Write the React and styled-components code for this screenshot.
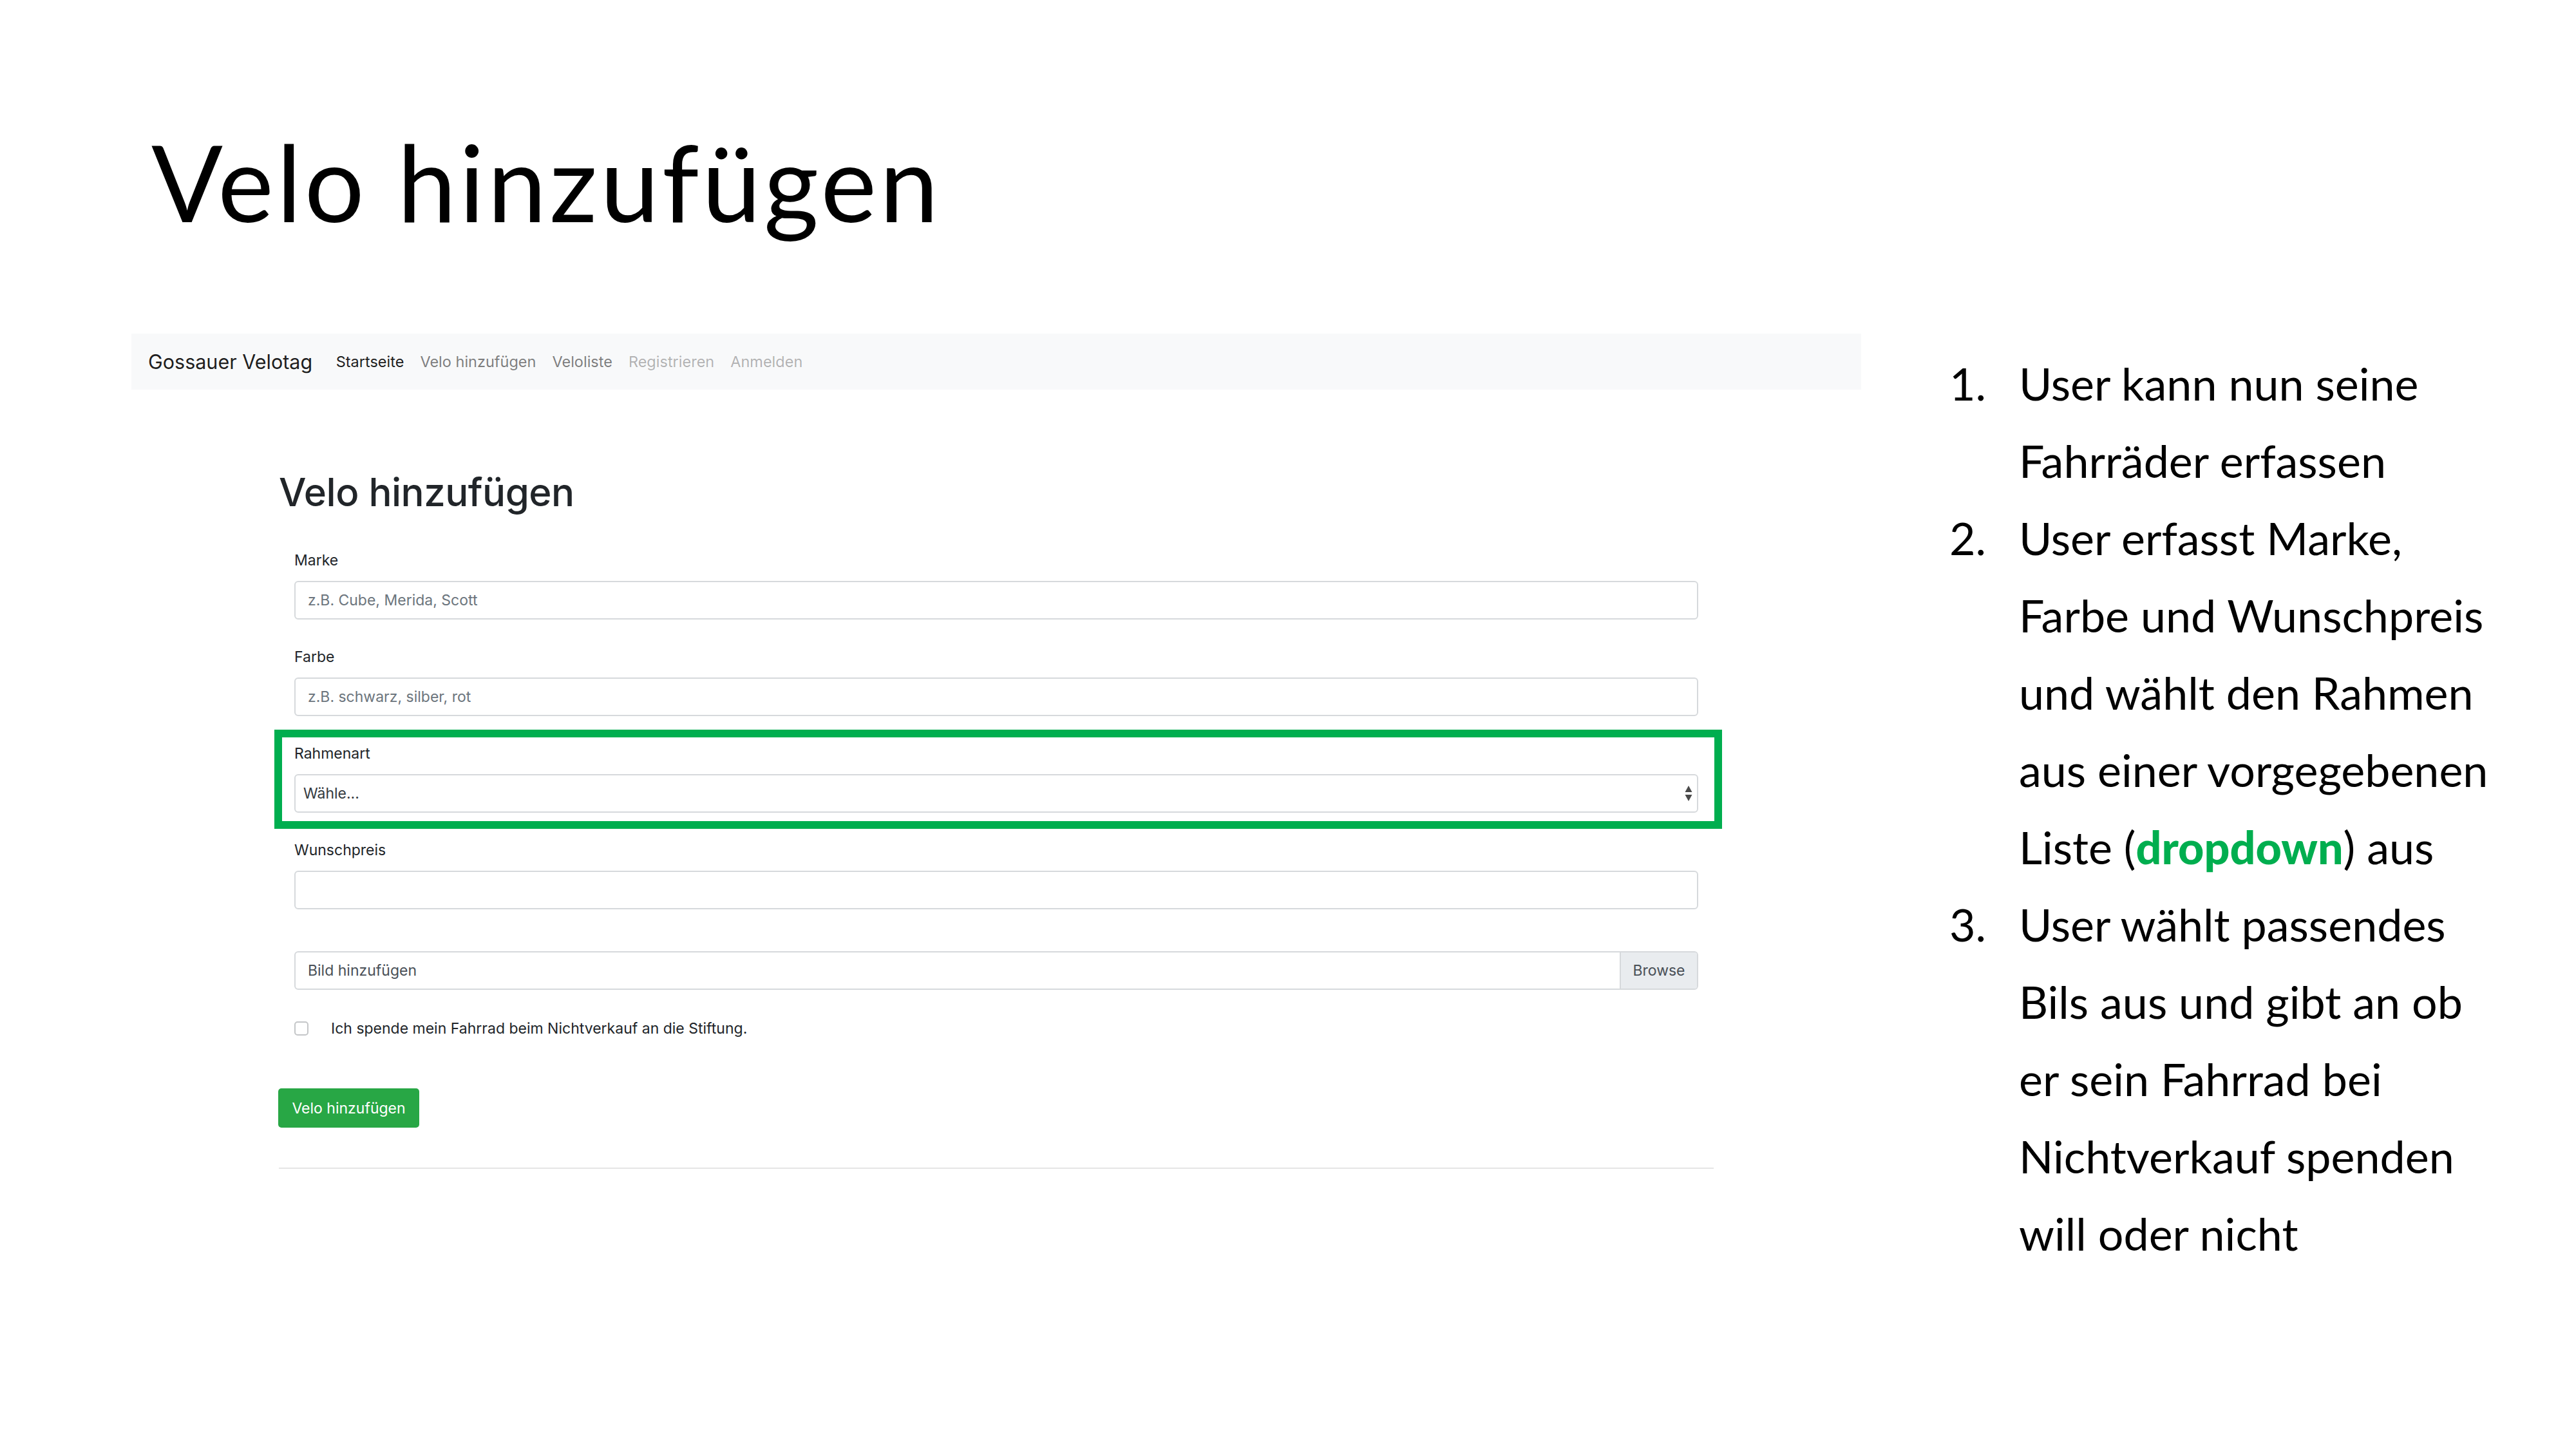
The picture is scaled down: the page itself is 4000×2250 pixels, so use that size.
import React from "react";
import styled, { createGlobalStyle } from "styled-components";

const Global = createGlobalStyle`
  html, body { margin: 0; padding: 0; background: #ffffff; }
  body { width: 4000px; height: 2250px; overflow: hidden; }
  * { box-sizing: border-box; }
`;

const Slide = styled.div`
  width: 4000px;
  height: 2250px;
  background: #ffffff;
  display: flex;
  flex-direction: column;
  font-family: Lato, "Open Sans", sans-serif;
  color: #000;
`;

const SlideTitle = styled.h1`
  margin: 183px 0 0 235px;
  font-family: Lato, "Open Sans", sans-serif;
  font-weight: 400;
  font-size: 164px;
  line-height: 197px;
  height: 197px;
  letter-spacing: 4.6px;
`;

const Body = styled.div`
  display: flex;
  align-items: flex-start;
  margin-top: 138px;
`;

/* ---------- web screenshot ---------- */
const Web = styled.div`
  margin-left: 204px;
  width: 2686px;
  font-family: Inter, "Liberation Sans", sans-serif;
  color: #212529;
`;

const NavBar = styled.nav`
  height: 87px;
  background: #f8f9fa;
  display: flex;
  align-items: center;
  padding: 0 26px;
`;

const Brand = styled.span`
  font-size: 30.5px;
  color: rgba(0, 0, 0, 0.9);
  margin-right: 24px;
`;

const NavLink = styled.span`
  font-size: 23.5px;
  padding: 0 12.5px;
  color: ${(p) =>
    p.$state === "active"
      ? "rgba(0,0,0,0.9)"
      : p.$state === "disabled"
      ? "rgba(0,0,0,0.3)"
      : "rgba(0,0,0,0.5)"};
`;

const Container = styled.div`
  padding: 0 229px;
`;

const Heading = styled.h2`
  margin: 121px 0 0 0;
  font-size: 60px;
  line-height: 77px;
  font-weight: 500;
  color: #212529;
  letter-spacing: -0.5px;
`;

const Form = styled.form`
  display: flex;
  flex-direction: column;
  padding: 0 24px;
  margin-top: 48px;
`;

const Group = styled.div`
  display: flex;
  flex-direction: column;
  margin-bottom: ${(p) => p.$mb ?? 39}px;
`;

const HighlightGroup = styled(Group)`
  border: 12px solid #00ae4f;
  padding: 6px 25px 13px 19px;
  margin: -18px -37px 14px -31px;
`;

const Label = styled.label`
  font-size: 23px;
  line-height: 38px;
  height: 38px;
  margin-bottom: 13px;
  color: #212529;
`;

const Input = styled.input`
  height: 60px;
  width: 100%;
  border: 2px solid #d6d9dc;
  border-radius: 6px;
  padding: 0 19px;
  font-family: Inter, "Liberation Sans", sans-serif;
  font-size: 23px;
  color: #495057;
  background: #fff;
  &::placeholder { color: #6c757d; }
`;

const Select = styled.div`
  height: 60px;
  border: 2px solid #d6d9dc;
  border-radius: 6px;
  padding: 0 6px 0 12px;
  display: flex;
  align-items: center;
  justify-content: space-between;
  font-size: 23px;
  color: #343a40;
  background: #fff;
`;

const FileBox = styled.div`
  height: 60px;
  border: 2px solid #d6d9dc;
  border-radius: 6px;
  display: flex;
  align-items: stretch;
  overflow: hidden;
  background: #fff;
`;

const FileText = styled.span`
  flex: 1;
  display: flex;
  align-items: center;
  padding: 0 19px;
  font-size: 23px;
  color: #495057;
`;

const Browse = styled.span`
  width: 120px;
  display: flex;
  align-items: center;
  justify-content: center;
  background: #e9ecef;
  border-left: 2px solid #d6d9dc;
  font-size: 23px;
  color: #495057;
`;

const CheckRow = styled.div`
  display: flex;
  align-items: center;
  gap: 35px;
  margin-top: 46px;
`;

const Check = styled.input`
  appearance: none;
  margin: 0;
  width: 22px;
  height: 22px;
  border: 2px solid #c4c6c8;
  border-radius: 5px;
  background: #fff;
`;

const CheckLabel = styled.span`
  font-size: 23px;
  color: #212529;
`;

const SubmitButton = styled.button`
  align-self: flex-start;
  margin: 79px 0 0 -25px;
  height: 61px;
  width: 219px;
  border: none;
  border-radius: 5px;
  background: #28a745;
  color: #fff;
  font-family: Inter, "Liberation Sans", sans-serif;
  font-size: 23px;
`;

const Rule = styled.hr`
  margin: 62px 0 0 0;
  border: none;
  border-top: 2px solid #e5e5e5;
`;

/* ---------- notes ---------- */
const Notes = styled.ol`
  list-style: none;
  margin: 17px 0 0 137px;
  padding: 0;
  font-family: Lato, "Open Sans", sans-serif;
  font-size: 70px;
  line-height: 120px;
  color: #000;
`;

const Item = styled.li`
  display: grid;
  grid-template-columns: 108px auto;
`;

const Num = styled.span``;

const Green = styled.strong`
  color: #00ae4f;
  font-weight: 900;
`;

const Arrows = () => (
  <svg width="14" height="26" viewBox="0 0 14 26">
    <polygon points="7,1 12.5,11 1.5,11" fill="#4a4a4a" />
    <polygon points="1.5,15 12.5,15 7,25" fill="#4a4a4a" />
  </svg>
);

export default function App() {
  return (
    <Slide>
      <Global />
      <SlideTitle>Velo hinzufügen</SlideTitle>
      <Body>
        <Web>
          <NavBar>
            <Brand>Gossauer Velotag</Brand>
            <NavLink $state="active">Startseite</NavLink>
            <NavLink>Velo hinzufügen</NavLink>
            <NavLink>Veloliste</NavLink>
            <NavLink $state="disabled">Registrieren</NavLink>
            <NavLink $state="disabled">Anmelden</NavLink>
          </NavBar>
          <Container>
            <Heading>Velo hinzufügen</Heading>
            <Form>
              <Group>
                <Label>Marke</Label>
                <Input placeholder="z.B. Cube, Merida, Scott" />
              </Group>
              <Group>
                <Label>Farbe</Label>
                <Input placeholder="z.B. schwarz, silber, rot" />
              </Group>
              <HighlightGroup>
                <Label>Rahmenart</Label>
                <Select>
                  <span>Wähle...</span>
                  <Arrows />
                </Select>
              </HighlightGroup>
              <Group $mb={65}>
                <Label>Wunschpreis</Label>
                <Input />
              </Group>
              <FileBox>
                <FileText>Bild hinzufügen</FileText>
                <Browse>Browse</Browse>
              </FileBox>
              <CheckRow>
                <Check type="checkbox" />
                <CheckLabel>Ich spende mein Fahrrad beim Nichtverkauf an die Stiftung.</CheckLabel>
              </CheckRow>
              <SubmitButton type="button">Velo hinzufügen</SubmitButton>
            </Form>
            <Rule />
          </Container>
        </Web>
        <Notes>
          <Item>
            <Num>1.</Num>
            <span>User kann nun seine<br />Fahrräder erfassen</span>
          </Item>
          <Item>
            <Num>2.</Num>
            <span>
              User erfasst Marke,<br />Farbe und Wunschpreis<br />und wählt den Rahmen<br />aus einer vorgegebenen<br />Liste (<Green>dropdown</Green>) aus
            </span>
          </Item>
          <Item>
            <Num>3.</Num>
            <span>
              User wählt passendes<br />Bils aus und gibt an ob<br />er sein Fahrrad bei<br />Nichtverkauf spenden<br />will oder nicht
            </span>
          </Item>
        </Notes>
      </Body>
    </Slide>
  );
}
